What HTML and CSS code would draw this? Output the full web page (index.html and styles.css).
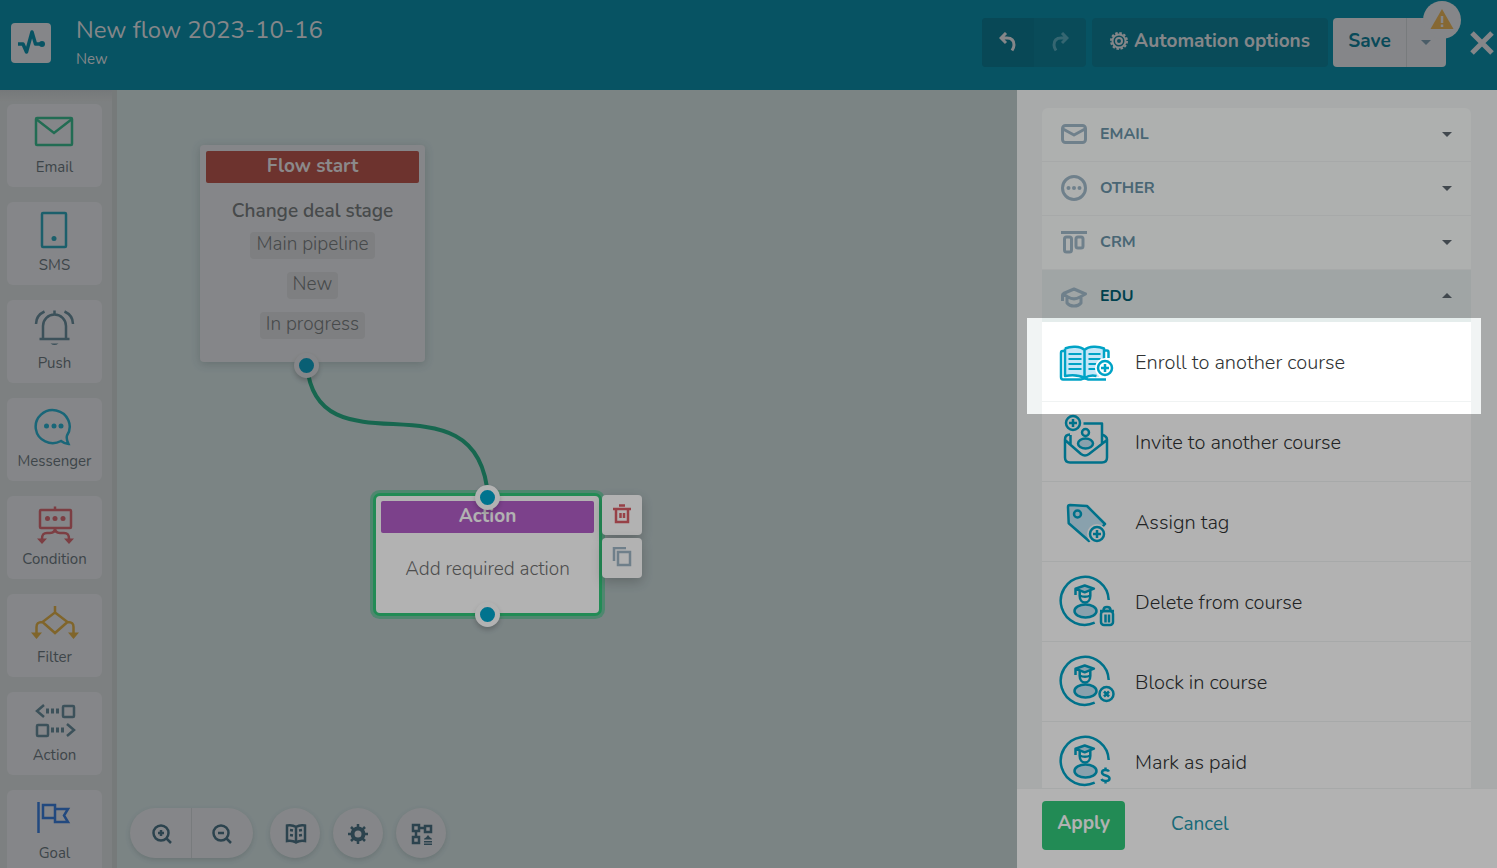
FILE: index.html
```html
<!DOCTYPE html>
<html lang="en">
<head>
  <meta charset="UTF-8" />
  <meta name="viewport" content="width=device-width, initial-scale=1.0" />
  <title>New flow 2023-10-16</title>
  <link rel="stylesheet" href="styles.css">
</head>
<body>
  <!-- shared shapes -->
  <svg class="defs" aria-hidden="true">
    <symbol id="student" viewBox="0 0 56 56">
      <path d="M49.7 25A24 24 0 1 0 35.7 47.7" />
      <ellipse class="tint" cx="26.5" cy="36" rx="11" ry="6.5" />
      <path d="M20.7 16v5c0 4 2.5 6.5 5.3 6.5s5.3-2.5 5.3-6.5v-5M20.7 20.5c3 1.500 7.600 1.500 10.600 0" />
      <path class="tint" d="M16.5 13.7l9.200-3.200 9.200 3.200-9.200 3.600zM16.500 14v6" />
    </symbol>
    <symbol id="plus" viewBox="0 0 18 18">
      <circle cx="9" cy="9" r="7" /><path d="M9 5v8M5 9h8" />
    </symbol>
  </svg>

  <header class="header">
    <a class="logo" href="#" aria-label="Home">
      <svg width="40" height="40" viewBox="0 0 40 40"><path d="M7 21h5l3.500 8L21 9l3.500 12H31" fill="none" stroke="currentColor" stroke-width="3.500" stroke-linejoin="round" /><circle cx="31" cy="21" r="3" fill="currentColor" /></svg>
    </a>
    <div class="flow-name">
      <h1>New flow 2023-10-16</h1>
      <p>New</p>
    </div>
    <div class="header-actions">
      <div class="history">
        <button aria-label="Undo"><svg width="18" height="20" viewBox="0 0 18 20"><path d="M7 1L2 6l5 5M2.500 6H8c5 0 7 3 7 7 0 2-1 4-2 5.500" /></svg></button>
        <button class="redo" aria-label="Redo"><svg width="18" height="20" viewBox="0 0 18 20"><path d="M11 1l5 5-5 5M15.500 6H10c-5 0-7 3-7 7 0 2 1 4 2 5.500" /></svg></button>
      </div>
      <button class="options">
        <svg width="18" height="18" viewBox="0 0 18 18"><circle cx="9" cy="9" r="8" stroke-dasharray="2.500 1.700" /><circle cx="9" cy="9" r="6.500" /><circle cx="9" cy="9" r="3" /></svg>
        Automation options
      </button>
      <div class="save-group">
        <button class="save">Save</button>
        <button class="save-more" aria-label="More save options"><span class="caret"></span></button>
        <span class="warning"><svg width="24" height="22" viewBox="0 0 24 22"><path class="sign" d="M12 1l11.500 20H.5z" /><path d="M12 8v7M12 16.500v2.500" /></svg></span>
      </div>
      <button class="close" aria-label="Close"><svg width="24" height="24" viewBox="0 0 24 24"><path d="M2 2l20 20M22 2L2 22" /></svg></button>
    </div>
  </header>

  <main class="editor">
    <nav class="elements" aria-label="Elements">
      <button class="element green">
        <svg width="48" height="40" viewBox="0 0 48 40"><rect x="5" y="6" width="36" height="27" rx="1" /><path d="M5 7l18 14L41 7" /></svg>
        Email
      </button>
      <button class="element teal">
        <svg width="48" height="40" viewBox="0 0 48 40"><rect x="11" y="3" width="24" height="34" rx="1" /><circle class="fill" cx="23" cy="28.500" r="2.500" /></svg>
        SMS
      </button>
      <button class="element slate">
        <svg width="48" height="40" viewBox="0 0 48 40"><path d="M8.500 31h30M12 31V18a11.500 11.500 0 0 1 23 0v13M23.500 6V2.500M5 16C5 11 8 6 13.500 3.500M42 16c0-5-3-10-8.500-12.500" /><path class="fill" d="M19.500 35.500h8q-4 3-8 0z" /></svg>
        Push
      </button>
      <button class="element blue">
        <svg width="48" height="40" viewBox="0 0 48 40"><path d="M30 35A17 16.500 0 1 1 36 29.500Q35 33 37.500 38 34 38 30 35z" /><g class="fill"><circle cx="15.500" cy="20" r="2.500" /><circle cx="23" cy="20" r="2.500" /><circle cx="30" cy="20" r="2.500" /></g></svg>
        Messenger
      </button>
      <button class="element red">
        <svg width="48" height="40" viewBox="0 0 48 40"><rect x="9" y="6" width="31" height="18" rx="1" /><path d="M24 2.500V6M24 24c0 4-2 5-5 5h-3c-4 0-5 2-5 6M24 24c0 4 2 5 5 5h4c4 0 5 2 5 6" /><g class="fill"><circle cx="16.500" cy="14.500" r="2.500" /><circle cx="24" cy="14.500" r="2.500" /><circle cx="32" cy="14.500" r="2.500" /><path d="M6 34.500h10L11 40zM33 34.500h10L38 40z" /></g></svg>
        Condition
      </button>
      <button class="element amber">
        <svg width="48" height="40" viewBox="0 0 48 40"><path d="M24 4v6.500L11.500 20 24 31l12.500-11L24 10.500M11.500 20c-4 0-6 1-6 5v6M36.500 20c4 0 6 1 6 5v6" /><path class="fill" d="M0 30.500h11L5.500 37zM37 30.500h11L42.500 37z" /></svg>
        Filter
      </button>
      <button class="element slate">
        <svg width="48" height="40" viewBox="0 0 48 40"><path d="M13 5L6 11l7 6" /><rect x="32" y="6" width="11" height="11" rx="1" /><rect x="6" y="25" width="11" height="11" rx="1" /><path d="M36 24l7 6-7 6" /><path d="M15 11h13M20 30h13" stroke-dasharray="3 2" class="dots" /></svg>
        Action
      </button>
      <button class="element royal">
        <svg width="48" height="40" viewBox="0 0 48 40"><path d="M7.500 4v31M12 7h12v13H12zM24 11h13l-4 6.500 4 6.500H24z" /></svg>
        Goal
      </button>
    </nav>

    <section class="canvas">
      <svg class="wires" width="600" height="600" viewBox="0 0 600 600"><path d="M190 276C201 388 362 276 371 407" /></svg>

      <article class="node start-node">
        <h2>Flow start</h2>
        <h3>Change deal stage</h3>
        <ul>
          <li>Main pipeline</li>
          <li>New</li>
          <li>In progress</li>
        </ul>
        <span class="port port-out"></span>
      </article>

      <article class="node action-node">
        <span class="port port-in"></span>
        <h2>Action</h2>
        <p>Add required action</p>
        <span class="port port-out"></span>
        <div class="node-tools">
          <button aria-label="Delete"><svg width="20" height="20" viewBox="0 0 20 20" stroke="#d95e66"><path d="M7 1.500h6M1 5h18M4 5v13h12V5M8.500 9v5M12 9v5" /></svg></button>
          <button aria-label="Copy"><svg width="20" height="20" viewBox="0 0 20 20" stroke="#a0b6c6"><path d="M2 14V1h12" /><rect x="6" y="5" width="12" height="13" /></svg></button>
        </div>
      </article>

      <div class="view-tools">
        <div class="zoom">
          <button aria-label="Zoom in"><svg width="20" height="20" viewBox="0 0 20 20"><circle cx="9" cy="9" r="7.500" /><path d="M14 14l5 5M9 6v6M6 9h6" /></svg></button>
          <button aria-label="Zoom out"><svg width="20" height="20" viewBox="0 0 20 20"><circle cx="9" cy="9" r="7.500" /><path d="M14 14l5 5M6 9h6" /></svg></button>
        </div>
        <button aria-label="Guide"><svg width="22" height="20" viewBox="0 0 22 20"><path d="M11 3C8 1 5 1 2 1.500V17c3-.5 6-.5 9 1.500 3-2 6-2 9-1.500V1.500C17 1 14 1 11 3zM11 3v15M5 6l3 .5M5 11l3 .5M17 6l-3 .5M17 11l-3 .5" /></svg></button>
        <button aria-label="Settings"><svg width="20" height="20" viewBox="0 0 20 20"><circle class="gear" cx="10" cy="10" r="5.500" /><path d="M10 0v4M10 16v4M0 10h4M16 10h4M3 3l2.500 2.500M14.500 14.500L17 17M17 3l-2.500 2.500M5.500 14.500L3 17" /></svg></button>
        <button aria-label="Arrange"><svg width="22" height="22" viewBox="0 0 22 22"><path d="M2 2h6v6H2zM14 3h6v6h-6zM2 14h6v6H2zM8 5h6M5 8v6" /><path class="solid" d="M13 16.500q0-1.500 2-2l2-2.500 2 2.500q2 .5 2 2zM13 18h8v1.500h-8zM13 20.500h8V22h-8z" /></svg></button>
      </div>
    </section>

    <aside class="panel">
      <div class="groups">
        <button class="group">
          <svg width="26" height="26" viewBox="0 0 26 26"><rect x="1.500" y="4.500" width="23" height="17" rx="3" /><path d="M2 8l11 6 11-6" /></svg>
          EMAIL<span class="caret"></span>
        </button>
        <button class="group">
          <svg width="26" height="26" viewBox="0 0 26 26"><circle cx="13" cy="13" r="11.500" /><g class="dot"><circle cx="7.500" cy="13" r="2" /><circle cx="13" cy="13" r="2" /><circle cx="18.500" cy="13" r="2" /></g></svg>
          OTHER<span class="caret"></span>
        </button>
        <button class="group">
          <svg width="26" height="26" viewBox="0 0 26 26"><path d="M0 3.500h26" /><rect x="3.500" y="8" width="7" height="15" rx="2" /><rect x="15" y="8" width="7" height="11" rx="2" /></svg>
          CRM<span class="caret"></span>
        </button>
        <button class="group open" aria-expanded="true">
          <svg width="26" height="26" viewBox="0 0 26 26"><path d="M1.500 18v-6q0-1 1-1.500L13 6l11.500 5-5.500 3c-4 2.500-8 2.500-12 0l-4-2.500M6 14v6c3 4 11 4 14 0v-6" /></svg>
          EDU<span class="caret up"></span>
        </button>

        <ul class="actions">
          <li class="current">
            <svg class="pic" width="56" height="56" viewBox="0 0 56 56"><path class="tint bare" d="M6 13.500C12 11 21 11 25.500 15 30 11 39 11 45 13.500V25l-5 17H25.500C20 40 12 40 6 41.500z" /><path d="M5 16H3.500Q2 16 2 18v24q0 2.500 2 2.500h18q3.500-2 7 0h18M6 13.500C12 11 21 11 25.500 15 30 11 39 11 45 13.500V24M25.500 15v28M6 13.500v27.500c6-1 14-1 19.500 2 4-2.500 8-3 12-2M46 15.500h2q1.500 0 1.500 2V23" /><path class="lines" d="M9.500 19h13M9.500 24h13M9.500 29h13M9.500 34h13M29.500 19h12M29.500 24h12M29.500 29h8M29.500 34h7" /><circle class="halo" cx="46" cy="33" r="10" /><use href="#plus" x="37" y="24" width="18" height="18" /></svg>
            Enroll to another course
            <span class="spotlight"></span>
          </li>
          <li>
            <svg class="pic" width="56" height="56" viewBox="0 0 56 56"><path d="M24.500 8.500H43V29M11.500 20v9M11 19.500q-5 0-5 5v18q0 5 5 5h32q5 0 5-5V24.500q0-3-5-5M6 25l16 14q4 3 8 0l18-14" /><circle cx="26.500" cy="17.500" r="3.500" /><ellipse class="tint" cx="26.500" cy="28.500" rx="7.500" ry="5" /><use href="#plus" x="5" y="-1" width="18" height="18" /></svg>
            Invite to another course
          </li>
          <li>
            <svg class="pic" width="56" height="56" viewBox="0 0 56 56"><path class="tint" d="M11 10l17 1 18 18-16 17L9.700 28.300 9 12q0-2 2-2z" /><circle cx="18.500" cy="19" r="3.500" /><circle class="halo" cx="38" cy="39" r="10" /><use href="#plus" x="29" y="30" width="18" height="18" /></svg>
            Assign tag
          </li>
          <li>
            <svg class="pic" width="56" height="56" viewBox="0 0 56 56"><use href="#student" width="56" height="56" /><rect x="42" y="36" width="12" height="14" rx="3" /><path d="M41 36h14M44.500 35c0-4 7-4 7 0M46.500 39.500v8M50 39.500v8" /></svg>
            Delete from course
          </li>
          <li>
            <svg class="pic" width="56" height="56" viewBox="0 0 56 56"><use href="#student" width="56" height="56" /><circle cx="47.500" cy="39" r="7" /><path d="M45 36.500l5 5M50 36.500l-5 5" /></svg>
            Block in course
          </li>
          <li>
            <svg class="pic" width="56" height="56" viewBox="0 0 56 56"><use href="#student" width="56" height="56" /><path d="M50 36.500c-1-2-7-2.500-7 1 0 4 7.500 2 7.500 6 0 3.500-7 3-8 .5M46.500 32.500V36M46.500 45v3.500" /></svg>
            Mark as paid
          </li>
        </ul>
      </div>
      <footer class="panel-footer">
        <button class="apply">Apply</button>
        <a class="cancel" href="#">Cancel</a>
      </footer>
    </aside>
  </main>
</body>
</html>
```

FILE: styles.css
```css
* {
  box-sizing: border-box;
}

body {
  margin: 0;
  height: 100vh;
  display: flex;
  flex-direction: column;
  overflow: hidden;
  font-family: Nunito, Lato, sans-serif;
  font-size: 19px;
  color: #4b5256;
}

h1, h2, h3, p, ul {
  margin: 0;
  padding: 0;
  list-style: none;
}

button {
  border: none;
  padding: 0;
  background: none;
  font: inherit;
  color: inherit;
  cursor: pointer;
}

svg {
  display: block;
  flex: none;
  fill: none;
}

.defs {
  position: absolute;
  width: 0;
  height: 0;
}

.caret {
  width: 10px;
  border: 5px solid transparent;
  border-top-color: currentColor;
  border-bottom: none;
}

.caret.up {
  border-top: none;
  border-bottom: 5px solid currentColor;
}

/* header */
.header {
  flex: none;
  height: 90px;
  padding: 0 3px 0 11px;
  display: flex;
  background: #0b788f;
  color: #bfc1c4;
}

.logo {
  width: 40px;
  height: 40px;
  margin-top: 23px;
  border-radius: 4px;
  background: #bfc1c4;
  color: #0b788f;
}

.flow-name {
  flex: 1;
  margin: 14px 0 0 25px;
}

.flow-name h1 {
  font-size: 24px;
  line-height: 32px;
  font-weight: 400;
}

.flow-name p {
  font-size: 15px;
  line-height: 26px;
}

.header-actions {
  display: flex;
  align-items: flex-start;
  padding-top: 18px;
  font-weight: 700;
}

.header-actions button {
  height: 49px;
}

.header-actions svg {
  stroke: currentColor;
  stroke-width: 3;
}

.history {
  display: flex;
  margin-right: 6px;
  border-radius: 4px;
  overflow: hidden;
  background: #0d6c80;
}

.history button {
  width: 52px;
  padding: 0 0 2px 17px;
  background: #0c677b;
}

.history .redo {
  background: none;
  color: #4c93a3;
}

.header-actions .options {
  display: flex;
  align-items: center;
  gap: 6px;
  margin-right: 5px;
  padding: 0 18px 4px;
  border-radius: 4px;
  background: #0d6c80;
}

.header-actions .options svg {
  stroke-width: 2;
}

.save-group {
  position: relative;
  display: flex;
  margin-right: 24px;
  border-radius: 4px;
  background: #bfc1c4;
  color: #0e6a80;
}

.save {
  width: 73px;
  padding-bottom: 4px;
}

.save-more {
  width: 40px;
  padding-left: 14px;
  border-left: 1px solid #acb0b3;
  color: #6b8494;
}

.save-more .caret {
  display: block;
}

.warning {
  position: absolute;
  top: -17px;
  right: -15px;
  width: 38px;
  height: 38px;
  padding: 7px;
  border-radius: 50%;
  background: #bfc1c4;
}

.header-actions .warning svg {
  stroke: #bfc1c4;
  stroke-width: 2.5;
}

.warning .sign {
  fill: #c0954a;
  stroke: none;
}

.header-actions .close svg {
  stroke-width: 5;
}

/* left bar */
.editor {
  flex: 1;
  min-height: 0;
  display: flex;
}

.elements {
  flex: none;
  width: 117px;
  padding: 14px 10px 0 7px;
  display: flex;
  flex-direction: column;
  gap: 15px;
  overflow: hidden;
  border-right: 5px solid #aaafaf;
  background: linear-gradient(#a9adaf, #b4b8b9 12px);
}

.element {
  flex: none;
  height: 83px;
  padding-top: 8px;
  display: flex;
  flex-direction: column;
  align-items: center;
  gap: 5px;
  border-radius: 6px;
  background: #bfc1c4;
  font-size: 15px;
  line-height: 20px;
  color: #59646a;
}

.element svg {
  stroke: var(--ink);
  stroke-width: 2.5;
}

.element .fill {
  fill: var(--ink);
  stroke: none;
}

.element .dots {
  stroke-width: 5;
}

.green { --ink: #329b78; }
.teal { --ink: #27899a; }
.slate { --ink: #567482; }
.blue { --ink: #2592ac; }
.red { --ink: #b25960; }
.amber { --ink: #b8913e; }
.royal { --ink: #3169b6; }

/* canvas */
.canvas {
  position: relative;
  flex: 1;
  min-width: 0;
  background: #b0bdbe;
}

.wires {
  position: absolute;
  left: 0;
  top: 0;
  stroke: #219472;
  stroke-width: 4;
}

.node {
  position: absolute;
  border-radius: 4px;
  text-align: center;
}

.node h2 {
  height: 32px;
  border-radius: 2px;
  font-size: 19px;
  line-height: 30px;
  font-weight: 700;
}

.start-node {
  left: 83px;
  top: 55px;
  width: 225px;
  height: 217px;
  padding: 6px;
  background: #bfc1c4;
  color: #666a6c;
  box-shadow: 0 2px 8px rgba(60, 80, 80, .25);
}

.start-node h2 {
  background: #9d4942;
  color: #c8c4c6;
}

.start-node h3 {
  margin-top: 15px;
  font-size: 19px;
  line-height: 26px;
  font-weight: 600;
}

.start-node ul {
  margin-top: 8px;
  display: flex;
  flex-direction: column;
  align-items: center;
  gap: 13px;
}

.start-node li {
  height: 27px;
  padding: 0 6px;
  border-radius: 4px;
  font-weight: 300;
  line-height: 24px;
  background: #b5b7b9;
}

.action-node {
  left: 259px;
  top: 406px;
  width: 223px;
  height: 117px;
  padding: 5px;
  background: #fff;
  color: #707070;
  box-shadow: 0 0 0 3px #32c87a, 0 0 0 6px #72c2a0;
}

.action-node h2 {
  background: #b25ec8;
  color: #fff;
}

.action-node p {
  font-weight: 300;
  line-height: 72px;
}

.port {
  position: absolute;
  left: 99px;
  width: 25px;
  height: 25px;
  border: 5px solid #fff;
  border-radius: 50%;
  background: #00a5cc;
  box-shadow: 0 3px 5px rgba(0, 0, 0, .2);
}

.port-in {
  top: -11px;
}

.port-out {
  bottom: -14px;
}

.start-node .port {
  left: 94px;
  bottom: -16px;
  border-color: #bfc1c4;
  background: #0e88a7;
}

.node-tools {
  position: absolute;
  left: 226px;
  top: -1px;
  display: grid;
  gap: 3px;
}

.node-tools button {
  width: 40px;
  height: 40px;
  padding: 0 10px 3px;
  border-radius: 4px;
  background: #fff;
  box-shadow: 0 4px 12px rgba(0, 0, 0, .2);
}

.node-tools svg {
  stroke-width: 2.5;
}

.view-tools {
  position: absolute;
  left: 13px;
  bottom: 10px;
  display: flex;
  gap: 13px;
  color: #3f6070;
}

.view-tools > * {
  height: 50px;
  border-radius: 25px;
  background: #bfc1c4;
  box-shadow: 0 2px 5px rgba(60, 80, 80, .2);
}

.view-tools > button {
  width: 50px;
  padding: 2px 0 0 15px;
}

.zoom {
  display: flex;
  margin-right: 4px;
}

.zoom button {
  width: 61px;
  padding: 2px 0 0 22px;
}

.zoom button + button {
  width: 62px;
  padding-left: 20px;
  border-left: 1px solid #adb1b3;
}

.view-tools svg {
  stroke: currentColor;
  stroke-width: 2.5;
}

.view-tools .gear {
  stroke-width: 4;
}

.view-tools .solid {
  fill: currentColor;
  stroke: none;
}

/* right panel */
.panel {
  flex: none;
  width: 480px;
  display: flex;
  flex-direction: column;
  background: #f1f4f4;
}

.groups {
  flex: 1;
  min-height: 0;
  padding: 18px 26px 0 25px;
}

.group {
  width: 100%;
  height: 54px;
  padding: 0 19px 1px;
  display: flex;
  align-items: center;
  gap: 13px;
  border-bottom: 1px solid #f0f3f3;
  background: #fafcfb;
  font-size: 16px;
  font-weight: 700;
  color: #6992a7;
}

.group:first-child {
  border-radius: 6px 6px 0 0;
}

.group svg {
  stroke: #a0b8c8;
  stroke-width: 3;
  stroke-linejoin: round;
}

.group .dot {
  fill: #a0b8c8;
  stroke: none;
}

.group .caret {
  margin-left: auto;
  color: #5d6770;
}

.group.open {
  height: 52px;
  border-bottom: none;
  background: #e5edec;
  color: #005e70;
}

.actions li {
  position: relative;
  height: 80px;
  padding: 2px 17px 0;
  display: flex;
  align-items: center;
  gap: 20px;
  border-bottom: 1px solid #f0f3f3;
  background: #fff;
  font-size: 20px;
  font-weight: 300;
  color: #303334;
}

.pic {
  overflow: visible;
  stroke: #00a3c6;
  stroke-width: 2.5;
  stroke-linejoin: round;
}

.tint {
  fill: #c5e7f8;
}

.pic .bare {
  stroke: none;
}

.pic .lines {
  stroke-width: 2;
}

.pic .halo {
  fill: #fff;
  stroke: none;
}

/* dims the whole page except the highlighted row */
.actions .spotlight {
  position: absolute;
  z-index: 10;
  top: -4px;
  right: -10px;
  bottom: -13px;
  left: -15px;
  pointer-events: none;
  box-shadow: 0 0 0 200vmax rgba(0, 0, 0, .3);
}

.panel-footer {
  position: relative;
  z-index: 1;
  height: 80px;
  padding: 12px 25px 0;
  display: flex;
  align-items: flex-start;
  gap: 46px;
  border-top: 1px solid #f0f3f3;
  background: #fff;
  line-height: 46px;
}

.apply {
  width: 83px;
  height: 49px;
  padding-bottom: 4px;
  border-radius: 4px;
  background: #32c87a;
  color: #fff;
  font-weight: 700;
  line-height: 45px;
}

.cancel {
  color: #2597ac;
  text-decoration: none;
}
```
